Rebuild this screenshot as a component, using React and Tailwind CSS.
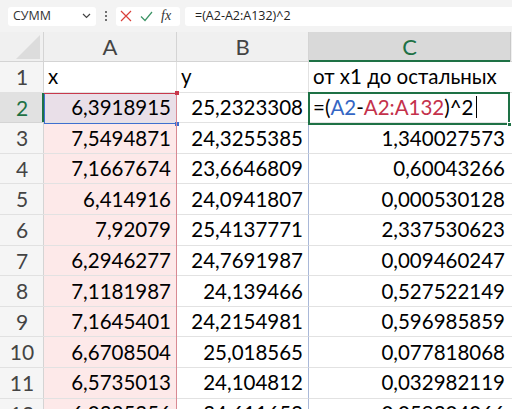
import React from "react";

const rows = [
  ["x", "y", "от x1 до остальных"],
  ["6,3918915", "25,2323308", null],
  ["7,5494871", "24,3255385", "1,340027573"],
  ["7,1667674", "23,6646809", "0,60043266"],
  ["6,414916", "24,0941807", "0,000530128"],
  ["7,92079", "25,4137771", "2,337530623"],
  ["6,2946277", "24,7691987", "0,009460247"],
  ["7,1181987", "24,139466", "0,527522149"],
  ["7,1645401", "24,2154981", "0,596985859"],
  ["6,6708504", "25,018565", "0,077818068"],
  ["6,5735013", "24,104812", "0,032982119"],
  ["6,0235256", "24,611653", "0,059204066"],
];

const cellFont = { fontFamily: "Lato, 'Open Sans', sans-serif" };

function RowHeader({ n, active }) {
  return (
    <div
      className={
        "flex items-center justify-center h-[30.6px] text-[21px] border-b " +
        (active
          ? "bg-[#e1e1e1] text-[#1e7145] border-[#d4d4d4] shadow-[inset_-2px_0_0_#1e7145]"
          : "bg-[#f5f5f5] text-[#444] border-[#e1e1e1] shadow-[inset_-1px_0_0_#d4d4d4]")
      }
      style={cellFont}
    >
      {n}
    </div>
  );
}

function Cell({ children, align = "right", className = "" }) {
  return (
    <div
      className={
        "flex items-center h-[30.6px] text-[20.5px] text-black border-b border-[#e2e2e2] whitespace-nowrap overflow-hidden " +
        (align === "right" ? "justify-end pr-[5px] " : "justify-start pl-[4px] ") +
        className
      }
      style={cellFont}
    >
      {children}
    </div>
  );
}

export default function App() {
  return (
    <div className="w-[512px] h-[409px] overflow-hidden bg-white relative">
      {/* formula bar */}
      <div
        className="h-[32px] bg-[#f3f3f3] flex items-center pl-[8px] gap-0"
        style={{ fontFamily: "'Open Sans', 'Noto Sans', sans-serif" }}
      >
        <div className="w-[88px] h-[19px] bg-white rounded-[3px] flex items-center justify-between pl-[5px] pr-[5px] text-[12.5px] text-[#333]">
          <span>СУММ</span>
          <svg width="9" height="6" viewBox="0 0 9 6" fill="none" stroke="#444" strokeWidth="1.2">
            <path d="M1 1l3.5 3.5L8 1" />
          </svg>
        </div>
        <div className="w-[20px] flex flex-col items-center gap-[2px]">
          <span className="w-[2px] h-[2px] bg-[#444] rounded-full" />
          <span className="w-[2px] h-[2px] bg-[#444] rounded-full" />
          <span className="w-[2px] h-[2px] bg-[#444] rounded-full" />
        </div>
        <div className="w-[64px] h-[19px] bg-white rounded-[3px] flex items-center pl-[4px] gap-[8px]">
          <svg width="12" height="12" viewBox="0 0 12 12" fill="none" stroke="#d9403a" strokeWidth="1.2">
            <path d="M1 1l10 10M11 1L1 11" />
          </svg>
          <svg width="13" height="11" viewBox="0 0 13 11" fill="none" stroke="#3c9466" strokeWidth="1.2">
            <path d="M1 5.5l4 4L12 1" />
          </svg>
          <span
            className="text-[14px] italic text-[#333] leading-none"
            style={{ fontFamily: "'Liberation Serif', serif" }}
          >
            fx
          </span>
        </div>
        <div className="ml-[5px] flex-1 h-[19px] bg-white rounded-l-[3px] flex items-center pl-[10px] text-[12.5px] text-[#222]">
          =(A2-A2:A132)^2
        </div>
      </div>

      {/* sheet grid */}
      <div className="relative">
        <div className="grid grid-cols-[44px_133px_132px_201px_2px]">
          {/* column headers */}
          <div className="h-[30px] bg-[#f0f0f0] border-b border-[#d4d4d4] border-r border-r-[#d4d4d4] relative overflow-hidden">
            <svg className="absolute right-[3px] bottom-[2px]" width="24" height="24" viewBox="0 0 24 24">
              <path d="M24 0V24H0Z" fill="#dcdcdc" />
            </svg>
          </div>
          {["A", "B"].map((c) => (
            <div
              key={c}
              className="h-[30px] bg-[#f0f0f0] border-b border-[#d4d4d4] border-r border-r-[#d4d4d4] flex items-center justify-center text-[22px] text-[#444]"
              style={cellFont}
            >
              {c}
            </div>
          ))}
          <div
            className="h-[30px] bg-[#d9d9d9] border-b-2 border-[#1e7145] flex items-center justify-center text-[22px] text-[#1e7145]"
            style={cellFont}
          >
            C
          </div>
          <div className="h-[30px] bg-[#f0f0f0] border-b border-[#d4d4d4] border-l border-l-[#c8c8c8]" />

          {rows.map((r, i) => {
            const n = i + 1;
            const inRange = n >= 2;
            return (
              <React.Fragment key={n}>
                <RowHeader n={n} active={n === 2} />
                <Cell
                  align={n === 1 ? "left" : "right"}
                  className={
                    (n === 2 ? "bg-[#e9dfe8] " : inRange ? "bg-[#fde9e9] " : "") +
                    "border-r border-r-[#e2e2e2]"
                  }
                >
                  {r[0]}
                </Cell>
                <Cell
                  align={n === 1 ? "left" : "right"}
                  className={"border-r " + (n >= 3 ? "border-r-[#a9b8d8]" : "border-r-[#e2e2e2]")}
                >
                  {r[1]}
                </Cell>
                <Cell align={n <= 2 ? "left" : "right"}>
                  {n === 2 ? (
                    <span className="flex items-center">
                      =(<span className="text-[#3466c4]">A2</span>-
                      <span className="text-[#c4314b]">A2:A132</span>)^2
                      <span className="ml-[2px] w-[1px] h-[22px] bg-black" />
                    </span>
                  ) : (
                    r[2]
                  )}
                </Cell>
                <div className="h-[30.6px] border-b border-[#e2e2e2]" />
              </React.Fragment>
            );
          })}
        </div>

        {/* reference highlight for A2 */}
        <div className="absolute left-[44px] top-[60.6px] w-[133px] h-[31.6px] border border-[#3f6fd0] pointer-events-none" />
        <div className="absolute left-[174.5px] top-[89.8px] w-[4px] h-[4px] bg-[#3f6fd0]" />
        {/* reference highlight for A2:A132 */}
        <div className="absolute left-[44px] top-[60.6px] w-[133px] h-[400px] border-t border-r border-[#c8384c] border-r-[#d88a93] pointer-events-none" />
        <div className="absolute left-[174.5px] top-[58.8px] w-[4px] h-[4px] bg-[#c8384c]" />
        {/* active cell C2 */}
        <div className="absolute left-[308px] top-[59.6px] w-[202px] h-[33px] border-2 border-[#1e7145] pointer-events-none" />
        <div className="absolute left-[507px] top-[90px] w-[5px] h-[5px] bg-[#1e7145] border border-white" />
      </div>
    </div>
  );
}
